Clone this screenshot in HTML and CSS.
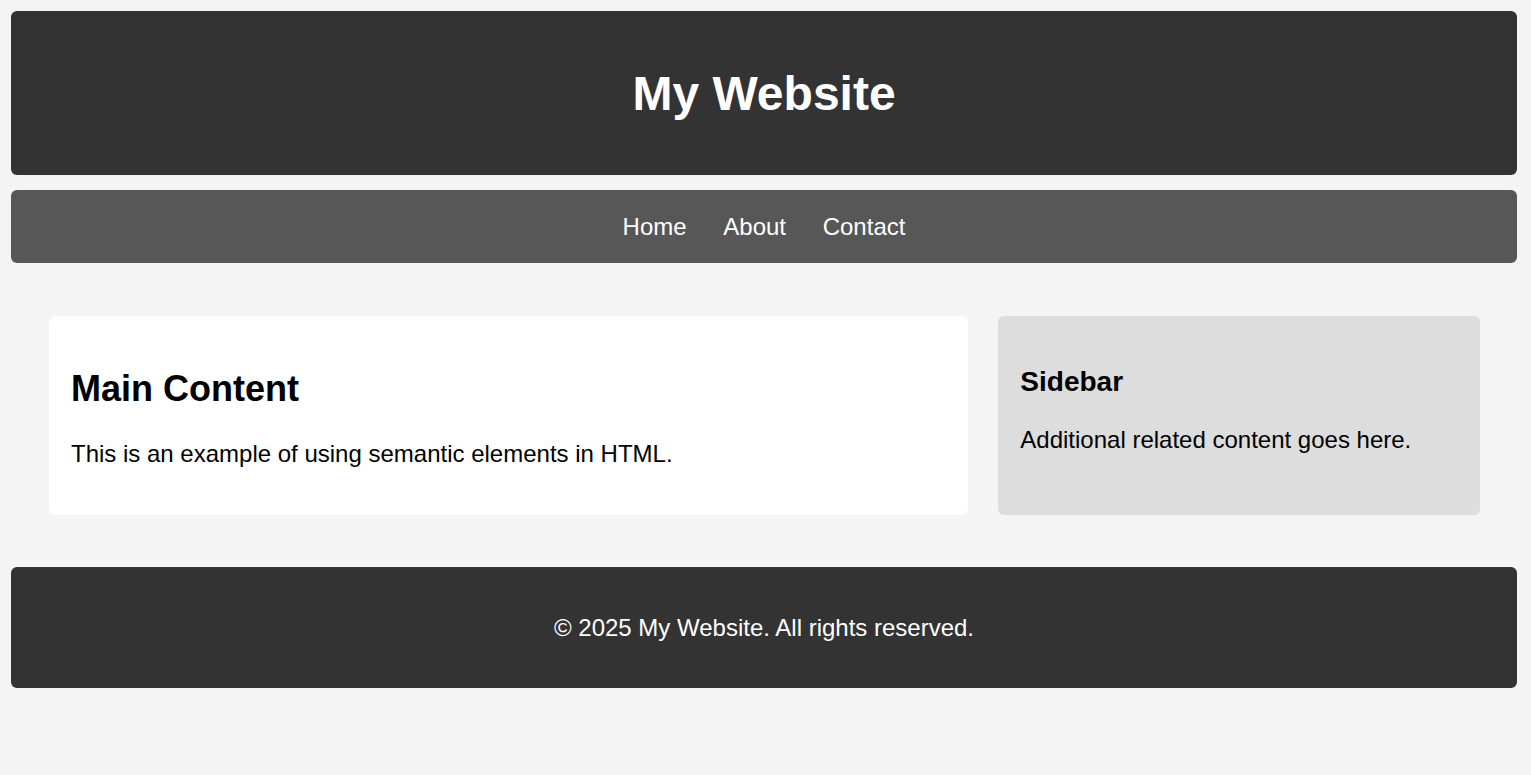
FILE: index.html
```html
<!DOCTYPE html>
<html lang="en">
<head>
<meta charset="utf-8">
<title>My Website</title>
<link rel="stylesheet" href="styles.css">
</head>
<body>
  <header class="site-header">
    <h1 class="site-title">My Website</h1>
  </header>
  <nav class="site-nav">
    <a href="#" class="nav-link">Home</a>
    <a href="#" class="nav-link">About</a>
    <a href="#" class="nav-link">Contact</a>
  </nav>
  <main class="site-main">
    <article class="content">
      <h2 class="content-title">Main Content</h2>
      <p class="content-text">This is an example of using semantic elements in HTML.</p>
    </article>
    <aside class="sidebar">
      <h3 class="sidebar-title">Sidebar</h3>
      <p class="sidebar-text">Additional related content goes here.</p>
    </aside>
  </main>
  <footer class="site-footer">
    <p class="footer-text">&copy; 2025 My Website. All rights reserved.</p>
  </footer>
</body>
</html>
```
FILE: styles.css
```css
html, body {
  margin: 0;
  padding: 0;
}
body {
  background: #f4f4f4;
  font-family: "Liberation Sans", Arial, sans-serif;
  color: #000;
  padding: 11px 14px 0 11px;
}
.site-header {
  background: #333;
  color: #fff;
  border-radius: 6px;
  height: 164px;
  display: flex;
  align-items: center;
  justify-content: center;
}
.site-title {
  margin: 0;
  font-size: 48px;
  font-weight: bold;
}
.site-nav {
  margin-top: 15px;
  background: #575757;
  border-radius: 6px;
  text-align: center;
  padding: 23px 0;
  line-height: 27px;
  font-size: 24px;
}
.nav-link {
  color: #fff;
  text-decoration: none;
  margin: 0 15px;
}
.site-main {
  display: flex;
  gap: 30px;
  padding: 53px 37px 52px 38px;
}
.content {
  flex: 2 1 0;
  background: #fff;
  border-radius: 6px;
  padding: 22px;
  height: 155px;
}
.sidebar {
  flex: 1 1 0;
  background: #ddd;
  border-radius: 6px;
  padding: 22px;
  height: 155px;
}
.content-title {
  margin: 30px 0 0;
  font-size: 36px;
  line-height: 42px;
}
.content-text {
  margin: 30px 0 0;
  font-size: 24px;
  line-height: 28px;
}
.sidebar-title {
  margin: 28px 0 0;
  font-size: 28px;
  line-height: 32px;
}
.sidebar-text {
  margin: 28px 0 0;
  font-size: 24px;
  line-height: 28px;
}
.site-footer {
  background: #333;
  color: #fff;
  border-radius: 6px;
  height: 121px;
  display: flex;
  align-items: center;
  justify-content: center;
}
.footer-text {
  margin: 0;
  font-size: 24px;
}
```
